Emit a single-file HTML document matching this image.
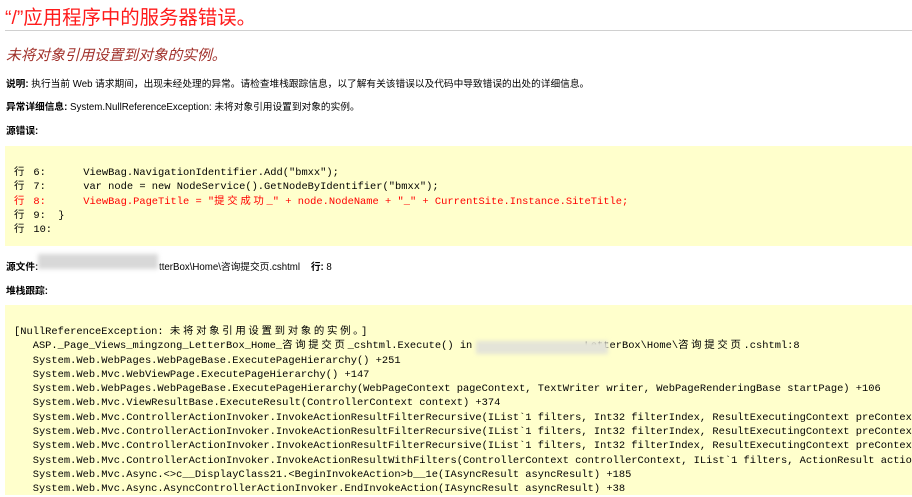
<!DOCTYPE html>
<html><head><meta charset="utf-8"><style>
body{margin:0;background:#fff;width:912px;height:495px;overflow:hidden;position:relative;font-family:"Liberation Sans","Noto Sans CJK SC",sans-serif;}
.a{position:absolute;white-space:nowrap;}
h1{position:absolute;left:5px;top:1px;margin:0;font-size:19.4px;font-weight:normal;color:#ff1a1a;font-family:"Liberation Sans","Noto Sans CJK SC",sans-serif;}
.hr{position:absolute;left:5px;right:0;top:30px;height:1px;background:#d0d0d0;}
.sub{left:6px;top:44px;font-size:14.7px;font-style:italic;color:#a0302a;}
.t{font-size:9.7px;color:#000;left:6px;}
.t b{font-weight:bold;}
.y{position:absolute;left:5px;width:920px;background:#ffffcc;}
pre{margin:0;position:absolute;font-family:"Liberation Mono","Noto Sans CJK SC",monospace;font-size:10.4px;line-height:14.3px;color:#000;}
.r{color:#f00;}
.c{letter-spacing:2.7px;}
.blur{position:absolute;background:#d8d8d8;filter:blur(2px);}
</style></head><body>
<h1>“/”应用程序中的服务器错误。</h1>
<div class="hr"></div>
<div class="a sub">未将对象引用设置到对象的实例。</div>
<div class="a t" style="top:76px"><b>说明:</b> 执行当前 Web 请求期间，出现未经处理的异常。请检查堆栈跟踪信息，以了解有关该错误以及代码中导致错误的出处的详细信息。</div>
<div class="a t" style="top:99px"><b>异常详细信息:</b> System.NullReferenceException: 未将对象引用设置到对象的实例。</div>
<div class="a t" style="top:123px"><b>源错误:</b></div>
<div class="y" style="top:146px;height:100px"></div>
<pre style="left:14px;top:166px"><span class="c">行</span> 6:      ViewBag.NavigationIdentifier.Add("bmxx");
<span class="c">行</span> 7:      var node = new NodeService().GetNodeByIdentifier("bmxx");
<span class="r"><span class="c">行</span> 8:      ViewBag.PageTitle = "<span class="c">提交成功</span>_" + node.NodeName + "_" + CurrentSite.Instance.SiteTitle;</span>
<span class="c">行</span> 9:  }
<span class="c">行</span> 10:</pre>
<div class="a t" style="top:259px"><b>源文件:</b> <span style="display:inline-block;width:118px"></span>tterBox\Home\咨询提交页.cshtml &nbsp;&nbsp; <b>行:</b> 8</div>
<div class="blur" style="left:38px;top:254px;width:120px;height:15px"></div>
<div class="a t" style="top:283px"><b>堆栈跟踪:</b></div>
<div class="y" style="top:305px;height:190px"></div>
<pre style="left:14px;top:325px">[NullReferenceException: <span class="c">未将对象引用设置到对象的实例。</span>]
   ASP._Page_Views_mingzong_LetterBox_Home_<span class="c">咨询提交页</span>_cshtml.Execute() in <span style="color:#bbb">                 </span>LetterBox\Home\<span class="c">咨询提交页</span>.cshtml:8
   System.Web.WebPages.WebPageBase.ExecutePageHierarchy() +251
   System.Web.Mvc.WebViewPage.ExecutePageHierarchy() +147
   System.Web.WebPages.WebPageBase.ExecutePageHierarchy(WebPageContext pageContext, TextWriter writer, WebPageRenderingBase startPage) +106
   System.Web.Mvc.ViewResultBase.ExecuteResult(ControllerContext context) +374
   System.Web.Mvc.ControllerActionInvoker.InvokeActionResultFilterRecursive(IList`1 filters, Int32 filterIndex, ResultExecutingContext preContext
   System.Web.Mvc.ControllerActionInvoker.InvokeActionResultFilterRecursive(IList`1 filters, Int32 filterIndex, ResultExecutingContext preContext
   System.Web.Mvc.ControllerActionInvoker.InvokeActionResultFilterRecursive(IList`1 filters, Int32 filterIndex, ResultExecutingContext preContext
   System.Web.Mvc.ControllerActionInvoker.InvokeActionResultWithFilters(ControllerContext controllerContext, IList`1 filters, ActionResult action
   System.Web.Mvc.Async.&lt;&gt;c__DisplayClass21.&lt;BeginInvokeAction&gt;b__1e(IAsyncResult asyncResult) +185
   System.Web.Mvc.Async.AsyncControllerActionInvoker.EndInvokeAction(IAsyncResult asyncResult) +38</pre>
<div class="blur" style="left:476px;top:341px;width:132px;height:13px;background:#e4e4d8"></div>
</body></html>
